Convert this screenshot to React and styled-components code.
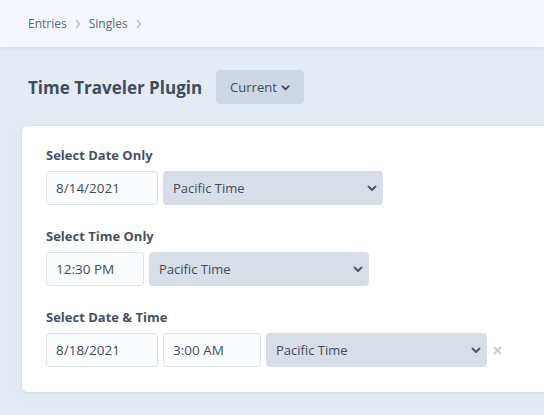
import React from 'react';
import styled, { createGlobalStyle } from 'styled-components';

const GlobalStyle = createGlobalStyle`
  html, body {
    margin: 0;
    padding: 0;
    background: #e4ebf4;
    font-family: "Open Sans", "Noto Sans", sans-serif;
    color: #3f4d5a;
    overflow: hidden;
  }
`;

const Page = styled.div`
  width: 544px;
  height: 415px;
  overflow: hidden;
`;

const TopBar = styled.header`
  height: 47px;
  background-color: #f3f7fc;
  box-shadow: 0 1px 4px rgba(31, 41, 51, 0.08);
  display: flex;
  align-items: center;
  padding: 0 28px;
  gap: 7px;
  font-size: 12px;
  color: #5b6774;
`;

const Crumb = styled.span`
  white-space: nowrap;
`;

const Header = styled.div`
  display: flex;
  align-items: center;
  gap: 14px;
  padding: 23px 28px 22px;
`;

const Title = styled.h1`
  margin: 0;
  font-size: 17px;
  font-weight: 700;
  color: #3f4d5a;
`;

const MenuButton = styled.button`
  display: flex;
  align-items: center;
  gap: 3px;
  height: 34px;
  padding: 0 13px 0 14px;
  border: none;
  border-radius: 4px;
  background-color: #cdd8e4;
  font-family: inherit;
  font-size: 13px;
  color: #3f4d5a;
`;

const Card = styled.section`
  margin-left: 22px;
  width: 540px;
  background-color: #ffffff;
  border-radius: 5px;
  box-shadow: 0 0 0 1px rgba(205, 216, 228, 0.4), 0 2px 6px rgba(205, 216, 228, 0.5);
  padding: 20px 24px 25px;
  display: flex;
  flex-direction: column;
  gap: 22px;
`;

const Field = styled.div`
  display: flex;
  flex-direction: column;
  gap: 7px;
`;

const Label = styled.label`
  font-size: 13px;
  font-weight: 700;
  color: #46525f;
`;

const Row = styled.div`
  display: flex;
  align-items: center;
  gap: 5px;
`;

const TextBox = styled.div`
  box-sizing: border-box;
  width: ${p => p.$w}px;
  height: 34px;
  padding: 0 9px;
  display: flex;
  align-items: center;
  background-color: #fbfcfe;
  border: 1px solid #dde3ea;
  border-radius: 3px;
  font-size: 13.5px;
  color: #3f4d5a;
`;

const Select = styled.div`
  box-sizing: border-box;
  width: ${p => p.$w}px;
  height: 34px;
  padding: 0 5px 0 10px;
  display: flex;
  align-items: center;
  justify-content: space-between;
  background-color: #d8dee7;
  border-radius: 4px;
  font-size: 13px;
  color: #3f4d5a;
`;

const Clear = styled.span`
  margin-left: 1px;
  display: flex;
  align-items: center;
`;

const Chevron = ({ size = 12, color = '#4a5764' }) => (
  <svg width={size} height={size} viewBox="0 0 12 12">
    <path d="M2.5 4.5 L6 8 L9.5 4.5" fill="none" stroke={color} strokeWidth="1.9" strokeLinecap="round" strokeLinejoin="round" />
  </svg>
);

const CrumbArrow = () => (
  <svg width="8" height="10" viewBox="0 0 8 10">
    <path d="M2.5 1.5 L5.5 5 L2.5 8.5" fill="none" stroke="#b8c1cb" strokeWidth="1.4" strokeLinecap="round" strokeLinejoin="round" />
  </svg>
);

const ClearIcon = () => (
  <svg width="9" height="9" viewBox="0 0 9 9">
    <path d="M1.5 1.5 L7.5 7.5 M7.5 1.5 L1.5 7.5" stroke="#c6ccd3" strokeWidth="2" strokeLinecap="round" />
  </svg>
);

const TimezoneSelect = ({ width }) => (
  <Select $w={width}>
    <span>Pacific Time</span>
    <Chevron />
  </Select>
);

const App = () => (
  <Page>
    <GlobalStyle />
    <TopBar>
      <Crumb>Entries</Crumb>
      <CrumbArrow />
      <Crumb>Singles</Crumb>
      <CrumbArrow />
    </TopBar>
    <Header>
      <Title>Time Traveler Plugin</Title>
      <MenuButton>
        Current
        <Chevron size={11} color="#3f4d5a" />
      </MenuButton>
    </Header>
    <Card>
      <Field>
        <Label>Select Date Only</Label>
        <Row>
          <TextBox $w={112}>8/14/2021</TextBox>
          <TimezoneSelect width={220} />
        </Row>
      </Field>
      <Field>
        <Label>Select Time Only</Label>
        <Row>
          <TextBox $w={98}>12:30 PM</TextBox>
          <TimezoneSelect width={220} />
        </Row>
      </Field>
      <Field>
        <Label>Select Date &amp; Time</Label>
        <Row>
          <TextBox $w={112}>8/18/2021</TextBox>
          <TextBox $w={98}>3:00 AM</TextBox>
          <TimezoneSelect width={221} />
          <Clear>
            <ClearIcon />
          </Clear>
        </Row>
      </Field>
    </Card>
  </Page>
);

export default App;
